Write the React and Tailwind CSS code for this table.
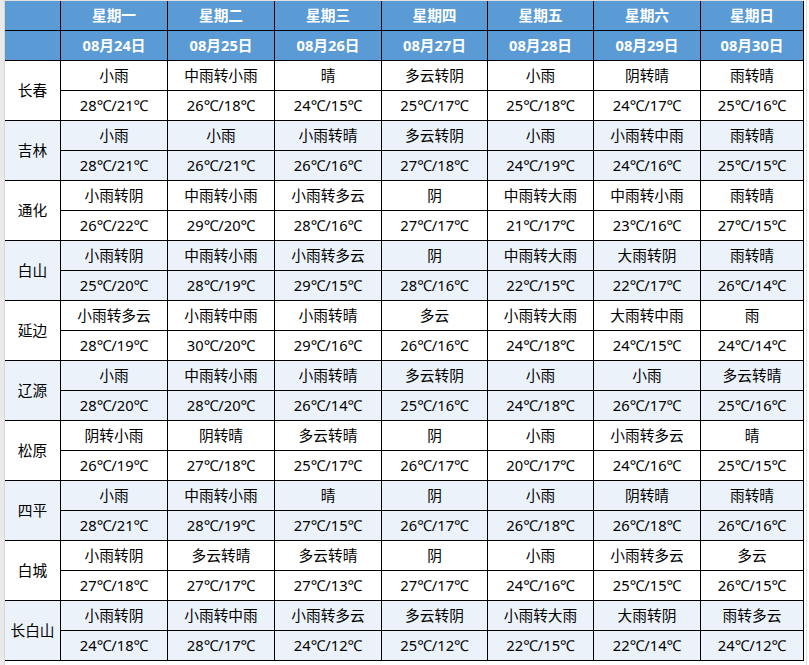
const days = ['星期一', '星期二', '星期三', '星期四', '星期五', '星期六', '星期日'];
const dates = ['08月24日', '08月25日', '08月26日', '08月27日', '08月28日', '08月29日', '08月30日'];

const cities = [
  ['长春', ['小雨', '中雨转小雨', '晴', '多云转阴', '小雨', '阴转晴', '雨转晴'], ['28℃/21℃', '26℃/18℃', '24℃/15℃', '25℃/17℃', '25℃/18℃', '24℃/17℃', '25℃/16℃']],
  ['吉林', ['小雨', '小雨', '小雨转晴', '多云转阴', '小雨', '小雨转中雨', '雨转晴'], ['28℃/21℃', '26℃/21℃', '26℃/16℃', '27℃/18℃', '24℃/19℃', '24℃/16℃', '25℃/15℃']],
  ['通化', ['小雨转阴', '中雨转小雨', '小雨转多云', '阴', '中雨转大雨', '中雨转小雨', '雨转晴'], ['26℃/22℃', '29℃/20℃', '28℃/16℃', '27℃/17℃', '21℃/17℃', '23℃/16℃', '27℃/15℃']],
  ['白山', ['小雨转阴', '中雨转小雨', '小雨转多云', '阴', '中雨转大雨', '大雨转阴', '雨转晴'], ['25℃/20℃', '28℃/19℃', '29℃/15℃', '28℃/16℃', '22℃/15℃', '22℃/17℃', '26℃/14℃']],
  ['延边', ['小雨转多云', '小雨转中雨', '小雨转晴', '多云', '小雨转大雨', '大雨转中雨', '雨'], ['28℃/19℃', '30℃/20℃', '29℃/16℃', '26℃/16℃', '24℃/18℃', '24℃/15℃', '24℃/14℃']],
  ['辽源', ['小雨', '中雨转小雨', '小雨转晴', '多云转阴', '小雨', '小雨', '多云转晴'], ['28℃/20℃', '28℃/20℃', '26℃/14℃', '25℃/16℃', '24℃/18℃', '26℃/17℃', '25℃/16℃']],
  ['松原', ['阴转小雨', '阴转晴', '多云转晴', '阴', '小雨', '小雨转多云', '晴'], ['26℃/19℃', '27℃/18℃', '25℃/17℃', '26℃/17℃', '20℃/17℃', '24℃/16℃', '25℃/15℃']],
  ['四平', ['小雨', '中雨转小雨', '晴', '阴', '小雨', '阴转晴', '雨转晴'], ['28℃/21℃', '28℃/19℃', '27℃/15℃', '26℃/17℃', '26℃/18℃', '26℃/18℃', '26℃/16℃']],
  ['白城', ['小雨转阴', '多云转晴', '多云转晴', '阴', '小雨', '小雨转多云', '多云'], ['27℃/18℃', '27℃/17℃', '27℃/13℃', '27℃/17℃', '24℃/16℃', '25℃/15℃', '26℃/15℃']],
  ['长白山', ['小雨转阴', '小雨转中雨', '小雨转多云', '多云转阴', '小雨转大雨', '大雨转阴', '雨转多云'], ['24℃/18℃', '28℃/17℃', '24℃/12℃', '25℃/12℃', '22℃/15℃', '22℃/14℃', '24℃/12℃']],
];

const font = { fontFamily: '"Noto Sans", "Noto Sans CJK SC", sans-serif' };

function HeadCell({ children }) {
  return (
    <div className="bg-[#5b9bd5] text-white font-bold flex items-center justify-center text-[14.7px]">
      {children}
    </div>
  );
}

export default function App() {
  return (
    <div className="w-[809px] h-[665px] bg-white flex overflow-hidden" style={font}>
      <div className="w-[5px] h-full bg-[#e9e9e9] border-r border-[#d6d6d6]" />
      <div className="flex flex-col">
        <div className="h-px bg-[#e2e2e2]" />
        <div className="grid grid-cols-[55px_106px_106px_106px_105px_105px_106px_102px] auto-rows-[29px] gap-px bg-black pr-px pb-px">
          <HeadCell />
          {days.map((d) => (
            <HeadCell key={d}>{d}</HeadCell>
          ))}
          <HeadCell />
          {dates.map((d) => (
            <HeadCell key={d}>{d}</HeadCell>
          ))}
          {cities.map(([name, weather, temps], i) => {
            const bg = i % 2 === 0 ? 'bg-white' : 'bg-[#ebf2fa]';
            return [
              <div key={name} className={`${bg} row-span-2 flex items-center justify-center text-[14.7px] text-black`}>
                {name}
              </div>,
              ...weather.map((w, j) => (
                <div key={name + 'w' + j} className={`${bg} flex items-center justify-center text-[14.7px] text-black`}>
                  {w}
                </div>
              )),
              ...temps.map((t, j) => (
                <div key={name + 't' + j} className={`${bg} flex items-center justify-center text-[14.7px] text-black`}>
                  {t}
                </div>
              )),
            ];
          })}
        </div>
      </div>
      <div className="flex-1 border-l border-[#e0e0e0] ml-[2px]" />
    </div>
  );
}
